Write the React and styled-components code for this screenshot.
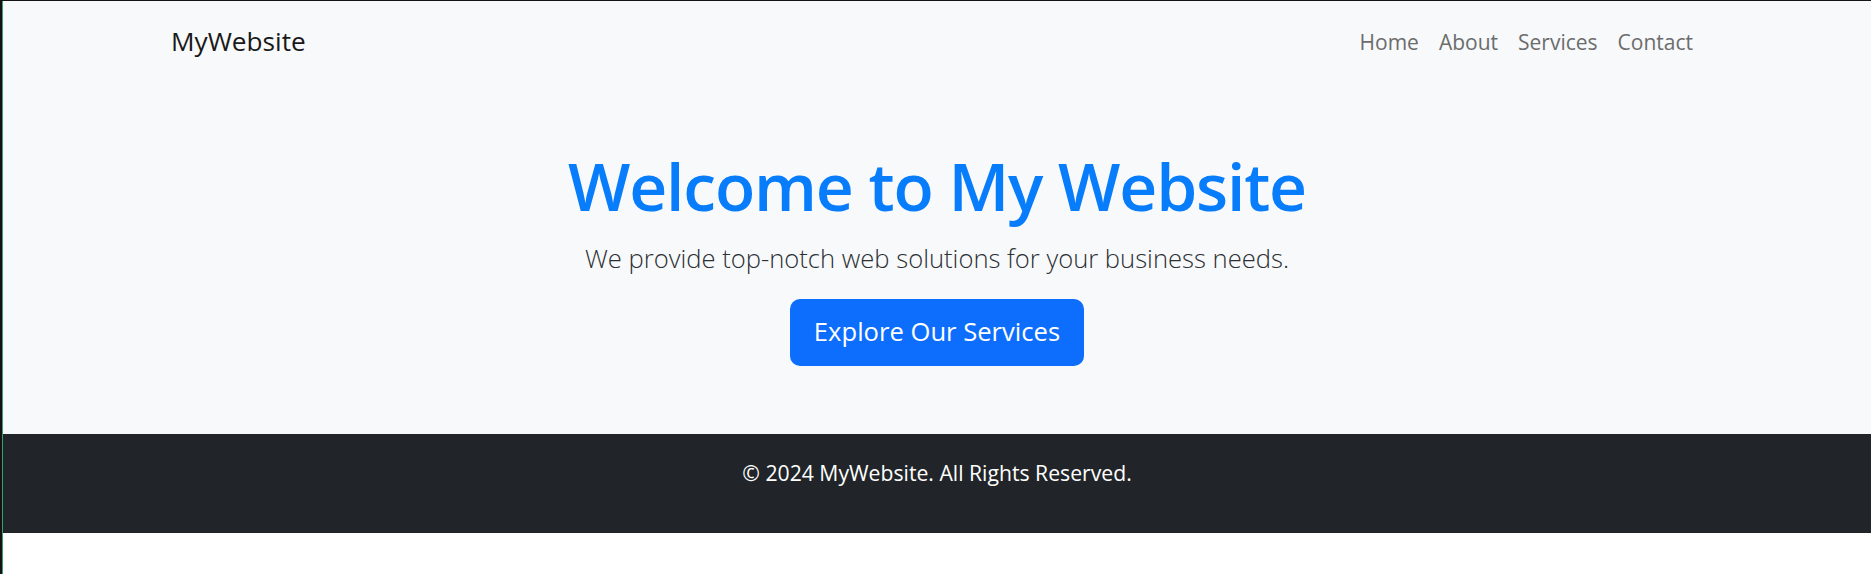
import React from 'react';
import styled, { createGlobalStyle } from 'styled-components';

const GlobalStyle = createGlobalStyle`
  html, body {
    margin: 0;
    padding: 0;
    background: #ffffff;
  }

  body {
    font-family: "Open Sans", "Noto Sans", sans-serif;
    font-size: 20px;
    line-height: 1.5;
    color: #212529;
  }
`;

const Frame = styled.div`
  min-height: 100vh;
  box-sizing: border-box;
  border-top: 1px solid #141414;
  border-left: 2px solid #141414;
`;

const Inner = styled.div`
  min-height: calc(100vh - 1px);
  border-left: 1px solid #3a9e6f;
`;

const Container = styled.div`
  max-width: 1532px;
  margin: 0 auto;
`;

const Navbar = styled.nav`
  background: #f8f9fa;
  padding: 22px 0 5px;

  ${Container} {
    display: flex;
    align-items: center;
    justify-content: space-between;
  }
`;

const Brand = styled.a`
  font-size: 26.2px;
  line-height: 37px;
  color: #191919;
  text-decoration: none;
`;

const NavList = styled.ul`
  display: flex;
  list-style: none;
  margin: 0;
  padding: 0;
`;

const NavLink = styled.a`
  display: block;
  padding: 0 10px;
  font-size: 21px;
  line-height: 30px;
  color: #6b6c6d;
  text-decoration: none;
`;

const Hero = styled.header`
  background: #f8f9fa;
  text-align: center;
  padding: 78px 0 68px;
`;

const Title = styled.h1`
  margin: 0 0 13px;
  font-size: 66px;
  line-height: 84px;
  font-weight: 600;
  letter-spacing: -1.2px;
  color: #087dfc;
`;

const Lead = styled.p`
  margin: 0 0 22px;
  font-size: 25.6px;
  line-height: 37px;
  font-weight: 300;
  color: #2b3035;
`;

const Button = styled.a`
  display: inline-block;
  padding: 13px 24px 14px;
  font-size: 25.6px;
  line-height: 40px;
  color: #ffffff;
  background: #0d6efd;
  border-radius: 10px;
  text-decoration: none;
`;

const Footer = styled.footer`
  background: #212529;
  color: #ffffff;
  text-align: center;
  padding: 24px 0 25px;

  p {
    margin: 0 0 20px;
    font-size: 21.2px;
    line-height: 30px;
  }
`;

const links = ['Home', 'About', 'Services', 'Contact'];

export default function App() {
  return (
    <>
      <GlobalStyle />
      <Frame>
        <Inner>
          <Navbar>
            <Container>
              <Brand href="#">MyWebsite</Brand>
              <NavList>
                {links.map((link) => (
                  <li key={link}>
                    <NavLink href="#">{link}</NavLink>
                  </li>
                ))}
              </NavList>
            </Container>
          </Navbar>
          <Hero>
            <Container>
              <Title>Welcome to My Website</Title>
              <Lead>We provide top-notch web solutions for your business needs.</Lead>
              <Button href="#">Explore Our Services</Button>
            </Container>
          </Hero>
          <Footer>
            <Container>
              <p>© 2024 MyWebsite. All Rights Reserved.</p>
            </Container>
          </Footer>
        </Inner>
      </Frame>
    </>
  );
}
